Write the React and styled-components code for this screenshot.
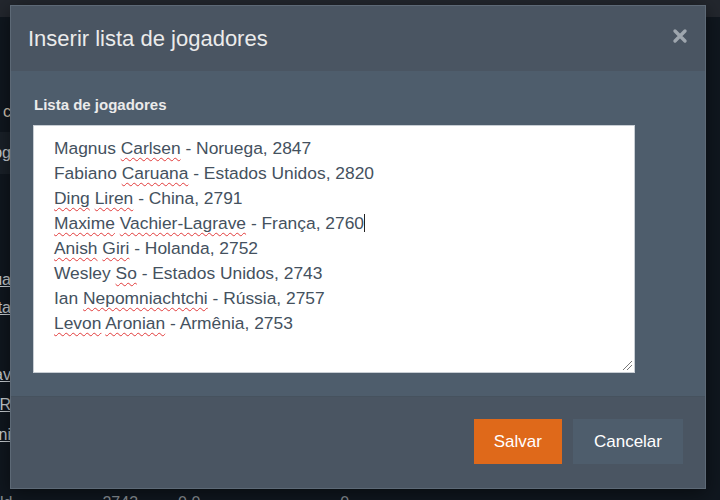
import React from 'react';
import styled, { createGlobalStyle } from 'styled-components';

const GlobalStyle = createGlobalStyle`
  html, body {
    margin: 0;
    padding: 0;
    background: #10171f;
    font-family: "Liberation Sans", Arial, sans-serif;
    overflow: hidden;
  }
`;

const Page = styled.div`
  width: 720px;
  height: 500px;
  display: flex;
  flex-direction: column;
`;

const TopBar = styled.div`
  height: 17px;
  background: #23272e;
`;

const EdgeLine = styled.div`
  width: 11px;
  height: ${p => p.h || 28}px;
  margin-top: ${p => p.gap || 0}px;
  display: flex;
  justify-content: flex-end;
  align-items: center;
  overflow: hidden;
  white-space: nowrap;
  font-size: 16px;
  color: ${p => p.color || '#c9ced3'};
  background: ${p => p.bg || 'transparent'};
  text-decoration: ${p => (p.link ? 'underline' : 'none')};
`;

const BottomRow = styled.div`
  margin-top: auto;
  height: 8px;
  display: flex;
  gap: 40px;
  font-size: 16px;
  line-height: 22px;
  color: #8a9096;
  overflow: hidden;
  & span:nth-child(2) { margin-left: 50px; }
  & span:nth-child(4) { margin-left: 100px; }
`;

const Modal = styled.div`
  position: fixed;
  top: 5px;
  left: 10px;
  width: 696px;
  height: 484px;
  box-sizing: border-box;
  border: 1px solid #5d6976;
  display: flex;
  flex-direction: column;
  box-shadow: 0 4px 18px rgba(0, 0, 0, 0.5);
`;

const Header = styled.div`
  height: 65px;
  background: #4a5562;
  display: flex;
  align-items: center;
  justify-content: space-between;
  padding: 0 17px 0 17px;
`;

const Title = styled.h4`
  margin: 0;
  font-size: 22px;
  font-weight: normal;
  color: #ebebeb;
  padding-top: 1px;
`;

const Close = styled.button`
  border: 0;
  background: none;
  padding: 0;
  width: 16px;
  height: 16px;
  margin-top: -6px;
  cursor: pointer;
  display: flex;
`;

const Body = styled.div`
  flex: 1;
  background: #4e5d6c;
  padding: 24px 22px 22px;
  display: flex;
  flex-direction: column;
`;

const Label = styled.label`
  font-size: 15px;
  font-weight: bold;
  color: #ebebeb;
  line-height: 20px;
  margin: 0 0 10px 1px;
`;

const TextBox = styled.div`
  position: relative;
  width: 602px;
  height: 248px;
  box-sizing: border-box;
  background: #fff;
  border: 1px solid #c8ced4;
  padding: 10px 20px;
  font-size: 17.4px;
  line-height: 25px;
  color: #44515e;
  white-space: pre;
`;

const Typo = styled.span`
  text-decoration: underline wavy #e23b3b;
  text-decoration-thickness: 1px;
  text-underline-offset: 3px;
  text-decoration-skip-ink: none;
`;

const Caret = styled.span`
  display: inline-block;
  width: 1px;
  height: 18px;
  background: #222;
  vertical-align: -3px;
`;

const Grip = styled.svg`
  position: absolute;
  right: 1px;
  bottom: 1px;
`;

const Footer = styled.div`
  height: 92px;
  background: #4a5562;
  border-top: 1px solid #46525e;
  box-sizing: border-box;
  display: flex;
  align-items: center;
  justify-content: flex-end;
  gap: 11px;
  padding: 0 22px 2px;
`;

const Button = styled.button`
  height: 45px;
  border: 0;
  padding: 0 ${p => (p.primary ? 20 : 21)}px;
  font-family: inherit;
  font-size: 17px;
  color: #fff;
  background: ${p => (p.primary ? '#df691a' : '#4e5d6c')};
  cursor: pointer;
`;

const players = [
  [['Magnus ', false], ['Carlsen', true], [' - Noruega, 2847', false]],
  [['Fabiano ', false], ['Caruana', true], [' - Estados Unidos, 2820', false]],
  [['Ding', true], [' ', false], ['Liren', true], [' - China, 2791', false]],
  [['Maxime', true], [' ', false], ['Vachier-Lagrave', true], [' - França, 2760', false]],
  [['Anish', true], [' ', false], ['Giri', true], [' - Holanda, 2752', false]],
  [['Wesley ', false], ['So', true], [' - Estados Unidos, 2743', false]],
  [['Ian ', false], ['Nepomniachtchi', true], [' - Rússia, 2757', false]],
  [['Levon', true], [' ', false], ['Aronian', true], [' - Armênia, 2753', false]],
];

export default function App() {
  return (
    <>
      <GlobalStyle />
      <Page>
        <TopBar />
        <EdgeLine gap={81} color="#d9c9b8">Fabian c</EdgeLine>
        <EdgeLine gap={6} h={42} bg="#1a2129">jog</EdgeLine>
        <EdgeLine gap={92} link>Tabua</EdgeLine>
        <EdgeLine gap={0} link>Lista</EdgeLine>
        <EdgeLine gap={39} link>Salav</EdgeLine>
        <EdgeLine gap={2} link>R</EdgeLine>
        <EdgeLine gap={2} link>Admini</EdgeLine>
        <BottomRow>
          <span>ld</span>
          <span>2743</span>
          <span>0.0</span>
          <span>0</span>
        </BottomRow>
      </Page>

      <Modal>
        <Header>
          <Title>Inserir lista de jogadores</Title>
          <Close aria-label="Fechar">
            <svg width="16" height="16" viewBox="0 0 16 16">
              <path d="M3 3 L13 13 M13 3 L3 13" stroke="#9ea6ae" strokeWidth="3.4" strokeLinecap="round" />
            </svg>
          </Close>
        </Header>
        <Body>
          <Label>Lista de jogadores</Label>
          <TextBox>
            {players.map((line, i) => (
              <div key={i}>
                {line.map(([t, bad], j) => (bad ? <Typo key={j}>{t}</Typo> : <span key={j}>{t}</span>))}
                {i === 3 && <Caret />}
              </div>
            ))}
            <Grip width="12" height="12" viewBox="0 0 12 12">
              <path d="M2 11 L11 2 M6 11 L11 6" stroke="#777" strokeWidth="1" />
            </Grip>
          </TextBox>
        </Body>
        <Footer>
          <Button primary>Salvar</Button>
          <Button>Cancelar</Button>
        </Footer>
      </Modal>
    </>
  );
}
